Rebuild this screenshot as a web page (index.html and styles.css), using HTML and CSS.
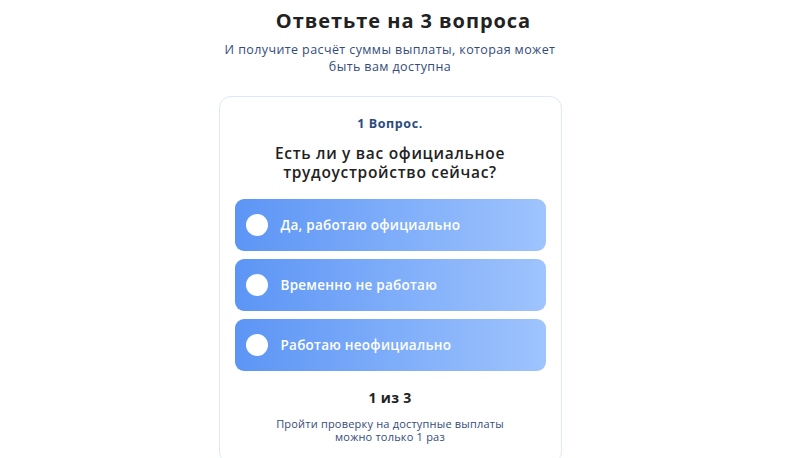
FILE: index.html
```html
<!DOCTYPE html>
<html lang="ru">
<head>
<meta charset="utf-8">
<link rel="stylesheet" href="styles.css">
</head>
<body>
<main class="page">
  <h1 class="title">Ответьте на 3 вопроса</h1>
  <p class="subtitle">И получите расчёт суммы выплаты, которая может<br>быть вам доступна</p>
  <section class="card">
    <div class="step">1 Вопрос.</div>
    <div class="question">Есть ли у вас официальное<br>трудоустройство сейчас?</div>
    <div class="options">
      <div class="option"><span class="dot"></span><span>Да, работаю официально</span></div>
      <div class="option"><span class="dot"></span><span>Временно не работаю</span></div>
      <div class="option"><span class="dot"></span><span>Работаю неофициально</span></div>
    </div>
    <div class="progress">1 из 3</div>
    <p class="note">Пройти проверку на доступные выплаты<br>можно только 1 раз</p>
  </section>
</main>
</body>
</html>
```
FILE: styles.css
```css
* { box-sizing: border-box; }
html, body { margin: 0; padding: 0; background: #fff; }
body { font-family: "Open Sans", "Noto Sans", sans-serif; overflow: hidden; height: 458px; }
.page { width: 780px; display: flex; flex-direction: column; align-items: center; padding-top: 8px; }
.title { margin: 0 0 0 27px; font-size: 20px; font-weight: 700; color: #222; line-height: 26px; letter-spacing: 0.95px; }
.subtitle { margin: 7px 0 0; font-size: 12.5px; line-height: 17px; color: #354c78; text-align: center; letter-spacing: 0.4px; }
.card { margin-top: 21px; width: 343px; border: 1px solid #dfe8f8; border-radius: 12px; padding: 18px 15px 20px; display: flex; flex-direction: column; align-items: center; }
.step { font-size: 12.5px; font-weight: 700; color: #2b4a80; line-height: 18px; letter-spacing: 0.6px; }
.question { margin-top: 11px; font-size: 15.5px; font-weight: 600; color: #222; line-height: 19px; text-align: center; letter-spacing: 0.7px; }
.options { margin-top: 17px; width: 100%; display: flex; flex-direction: column; gap: 8px; }
.option { height: 52px; border-radius: 9px; background: linear-gradient(90deg, #5c95f5 0%, #9fc4fd 100%); display: flex; align-items: center; padding-left: 11px; gap: 13px; color: #fff; font-size: 13.5px; font-weight: 600; letter-spacing: 0.25px; }
.dot { width: 22px; height: 22px; border-radius: 50%; background: #fff; flex: none; }
.progress { margin-top: 18px; font-size: 14px; font-weight: 700; color: #222; line-height: 18px; letter-spacing: 0.3px; }
.note { margin: 10px 0 0; font-size: 11px; line-height: 13px; color: #354c78; text-align: center; letter-spacing: 0.2px; }
```
